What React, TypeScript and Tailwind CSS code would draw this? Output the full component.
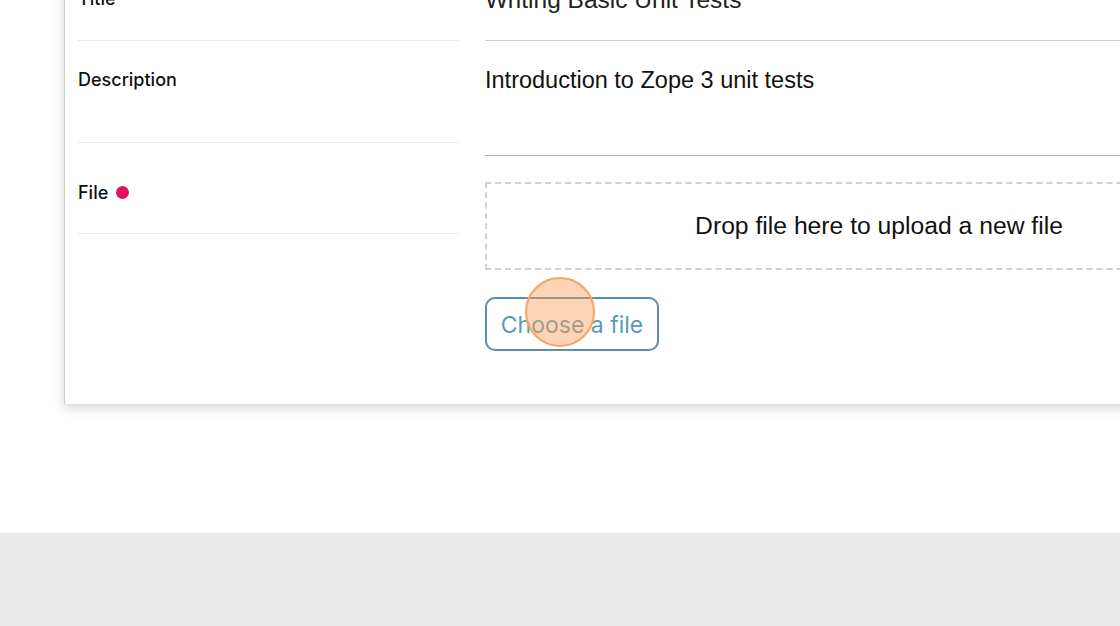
const inter = { fontFamily: 'Inter, "Noto Sans", sans-serif' }

export default function App() {
  return (
    <div className="w-[1120px] h-[626px] overflow-hidden flex flex-col bg-white">
      <div className="h-[533px] overflow-hidden bg-white">
        <div className="ml-[64px] -mt-[30px] w-[1200px] bg-white border-l border-[#c9d5da] shadow-[0_4px_10px_rgba(80,100,110,0.25)] flex gap-[26px] pl-[13px] pb-[53px]">
          {/* labels */}
          <div className="w-[381px] shrink-0 text-[18px] font-medium text-[#111]" style={inter}>
            <div className="h-[71px] pt-[17px] border-b border-[#e6ecee] leading-6">Title</div>
            <div className="h-[102px] pt-[27px] border-b border-[#e6ecee] leading-6">Description</div>
            <div className="h-[91px] pt-[38px] border-b border-[#e6ecee] leading-6 flex items-start gap-[8px]">
              File
              <span className="mt-[5px] w-[13px] h-[13px] rounded-full bg-[#e0115f]" />
            </div>
          </div>

          {/* fields */}
          <div className="flex-1 text-[#111]" style={{ fontFamily: '"Liberation Sans", Arial, sans-serif' }}>
            <div className="h-[71px] pt-[18px] border-b border-[#c3d0d6] text-[24.5px] leading-6 text-[#222]">
              Writing Basic Unit Tests
            </div>
            <div className="h-[115px] pt-[27px] border-b border-[#9fb8c4] text-[23.5px] leading-6">
              Introduction to Zope 3 unit tests
            </div>
            <div className="mt-[26px] h-[88px] w-[788px] border-2 border-dashed border-[#c9d4d7] flex items-center justify-center text-[24.7px] text-[#111]">
              Drop file here to upload a new file
            </div>
            <div className="mt-[27px] relative w-[174px]">
              <button
                className="w-[174px] h-[54px] pt-[2px] rounded-[10px] border-[2.5px] border-[#5791ac] text-[23px] text-[#5b9ab4] bg-white"
                style={inter}
              >
                Choose a file
              </button>
              <span className="absolute left-[40px] -top-[20px] w-[70px] h-[70px] rounded-full border-[2.5px] border-[#f6a560] bg-[rgba(251,160,90,0.45)]" />
            </div>
          </div>
        </div>
      </div>
      <div className="flex-1 bg-[#eaeaea]" />
    </div>
  )
}
